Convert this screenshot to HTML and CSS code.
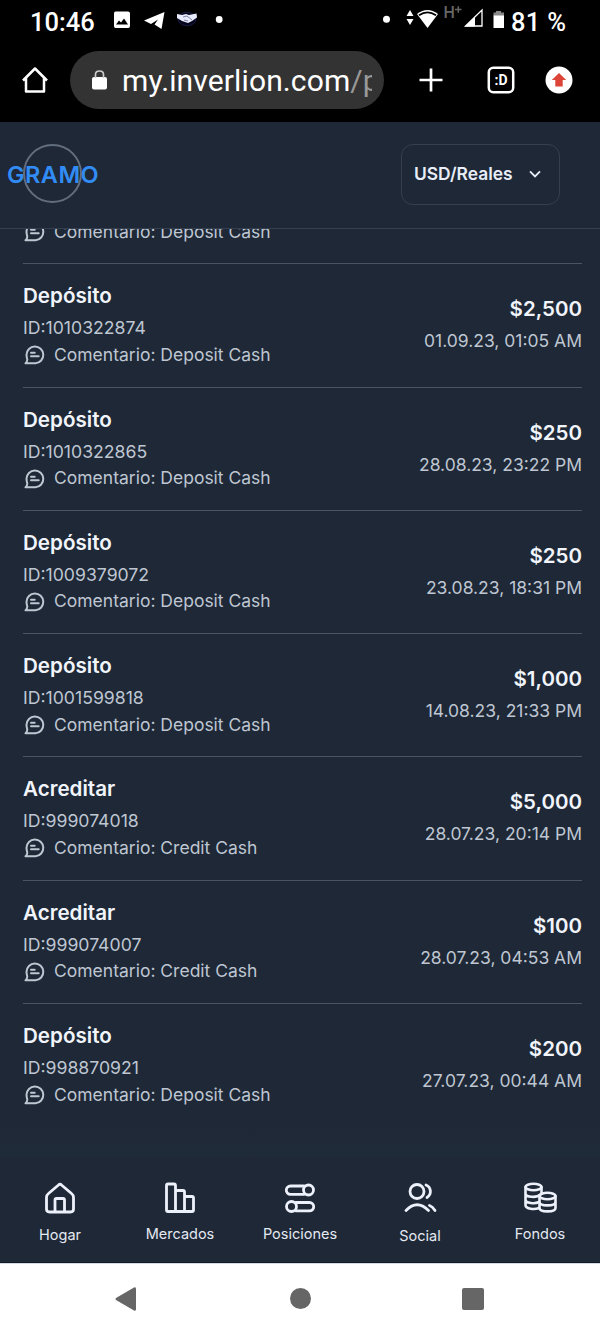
FILE: index.html
```
<!DOCTYPE html>
<html lang="es">
<head>
<meta charset="utf-8">
<title>Gramo</title>
<link rel="stylesheet" href="styles.css">
</head>
<body>
<svg class="defs" aria-hidden="true">
  <symbol id="chat" viewBox="0 0 22 20"><path d="M1.500 18.300H11.500A8.400 8.400 0 1 0 2.500 9.800C2.500 12 3 13.500 3.300 14.500C3.300 16.300 2.500 17.500 1.500 18.300ZM7 7.700H10.700M7 11.300H14.700" fill="none" stroke="currentColor" stroke-width="2" stroke-linecap="round" stroke-linejoin="round"/></symbol>
</svg>
<div class="phone">
  <div class="status">
    <span class="clock">10:46</span>
    <svg class="status-left" width="115" height="24" viewBox="0 0 115 24">
      <path fill="#fff" fill-rule="evenodd" d="M6.500 3.500H19Q21 3.500 21 5.500V18Q21 20 19 20H6.500Q5 20 5 18V5.500Q5 3.500 6.500 3.500ZM7 16.500H19L15 10.500L12 14.500L10 12.500Z"/>
      <path fill="#fff" d="M35 12.500L55.500 4L52.500 21L45.500 16.500L49 11.500L42 16Z"/>
      <ellipse cx="78" cy="11" rx="9" ry="6.800" fill="#05051c" stroke="#202052" stroke-width=".8"/>
      <path d="M68 6L73 7L77 6L80 7L87.500 5.500L88 9.500L83 13L79 15L73 13L68 10Z" fill="#e9ebff"/>
      <path d="M74 9L78 8L83 12M75 12L79 13" fill="none" stroke="#65678e" stroke-width=".8"/>
      <circle cx="110.200" cy="11.500" r="3.400" fill="#fff"/>
    </svg>
    <svg class="status-right" width="125" height="34" viewBox="0 0 125 34">
      <circle cx="5.500" cy="19.300" r="3.500" fill="#fff"/>
      <path fill="#fff" d="M25.500 16L29 10L32.500 16ZM25.500 19L29 25L32.500 19Z"/>
      <path fill="#fff" d="M36 14Q46.500 6 57 14L46.500 28Z"/><path d="M38 15.300Q46.500 9.300 55 15.300" stroke="#000" stroke-width="1.700" fill="none"/>
      <text class="network" x="62.500" y="17.500">H</text><path d="M74 9.500H80.500M77.300 6.300V12.700" stroke="#666" stroke-width="1.500"/>
      <path d="M84.500 26H101V10Z" fill="none" stroke="#fff" stroke-width="1.300"/><path fill="#fff" d="M84 26.500H94V16.500Z"/>
      <path fill="#888" d="M115 11H120V12.500H123V16H112.500V12.500H115Z"/><path fill="#fff" d="M112.500 15.500H123V28H112.500Z"/>
    </svg>
    <span class="battery">81 %</span>
  </div>
  <div class="browser">
    <svg class="home" width="28" height="28" viewBox="0 0 28 28"><path d="M2 14.500L14 2.500L26 14.500M5 12V25.500H23V12" fill="none" stroke="#fff" stroke-width="2.500" stroke-linejoin="round"/></svg>
    <div class="url">
      <svg width="16" height="20" viewBox="0 0 16 20"><rect y="7" width="15" height="12.500" rx="2" fill="#fff"/><path d="M3.500 8V4.500Q3.500 1 7.500 1Q11.500 1 11.500 4.500V8" fill="none" stroke="#ccc" stroke-width="1.700"/></svg>
      <span class="address">my.inverlion.com<span class="path">/p</span></span>
    </div>
    <svg class="plus" width="24" height="24" viewBox="0 0 24 24"><path d="M12 .5V23.500M.5 12H23.500" stroke="#fff" stroke-width="2.700"/></svg>
    <svg class="tabs" width="28" height="28" viewBox="0 0 28 28"><rect x="1.800" y="1.800" width="24.400" height="24.400" rx="4.500" fill="none" stroke="#fff" stroke-width="2.500"/><text x="7.500" y="18.500">:D</text></svg>
    <svg class="update" width="28" height="28" viewBox="0 0 28 28"><circle cx="14" cy="14" r="13.500" fill="#fff"/><path d="M14 7L21.200 14H17.700V20.500H10.300V14H6.800Z" fill="#db4437"/></svg>
  </div>
  <header class="header">
    <div class="brand"><span>GRAMO</span><i class="ring"></i></div>
    <button class="account"><span>USD/Reales</span><svg width="14" height="10" viewBox="0 0 14 10"><path d="M2 2.300L7 7.300L12 2.300" fill="none" stroke="currentColor" stroke-width="1.900"/></svg></button>
  </header>
  <main class="list">
    <section class="partial"><div class="note"><svg><use href="#chat"/></svg><span>Comentario: Deposit Cash</span></div></section>
    <section class="row"><div><h2>Depósito</h2><p class="id">ID:1010322874</p><div class="note"><svg><use href="#chat"/></svg><span>Comentario: Deposit Cash</span></div></div><div class="sum"><b>$2,500</b><p><span>01.09.23, 01:05 AM</span></p></div></section>
    <section class="row"><div><h2>Depósito</h2><p class="id">ID:1010322865</p><div class="note"><svg><use href="#chat"/></svg><span>Comentario: Deposit Cash</span></div></div><div class="sum"><b>$250</b><p><span>28.08.23, 23:22 PM</span></p></div></section>
    <section class="row"><div><h2>Depósito</h2><p class="id">ID:1009379072</p><div class="note"><svg><use href="#chat"/></svg><span>Comentario: Deposit Cash</span></div></div><div class="sum"><b>$250</b><p><span>23.08.23, 18:31 PM</span></p></div></section>
    <section class="row"><div><h2>Depósito</h2><p class="id">ID:1001599818</p><div class="note"><svg><use href="#chat"/></svg><span>Comentario: Deposit Cash</span></div></div><div class="sum"><b>$1,000</b><p><span>14.08.23, 21:33 PM</span></p></div></section>
    <section class="row"><div><h2>Acreditar</h2><p class="id">ID:999074018</p><div class="note"><svg><use href="#chat"/></svg><span>Comentario: Credit Cash</span></div></div><div class="sum"><b>$5,000</b><p><span>28.07.23, 20:14 PM</span></p></div></section>
    <section class="row"><div><h2>Acreditar</h2><p class="id">ID:999074007</p><div class="note"><svg><use href="#chat"/></svg><span>Comentario: Credit Cash</span></div></div><div class="sum"><b>$100</b><p><span>28.07.23, 04:53 AM</span></p></div></section>
    <section class="row"><div><h2>Depósito</h2><p class="id">ID:998870921</p><div class="note"><svg><use href="#chat"/></svg><span>Comentario: Deposit Cash</span></div></div><div class="sum"><b>$200</b><p><span>27.07.23, 00:44 AM</span></p></div></section>
  </main>
  <nav class="nav">
    <a class="low"><svg viewBox="0 0 34 34"><path d="M5.500 12.500Q3.500 14 3.500 16.500V28Q3.500 31 6.500 31H27.500Q30.500 31 30.500 28V16.500Q30.500 14 28.500 12.500L18.500 4Q17 2.500 15.500 4ZM12 31V19Q12 17.500 13.500 17.500H20Q21.500 17.500 21.500 19V31"/></svg><span>Hogar</span></a>
    <a><svg viewBox="0 0 34 34"><path d="M5 3H11Q12.500 3 12.500 4.500V30.500H5Q3.500 30.500 3.500 29V4.500Q3.500 3 5 3ZM12.500 9.500H20Q21.500 9.500 21.500 11V30.500H12.500M21.500 15.500H29Q30.500 15.500 30.500 17V29Q30.500 30.500 29 30.500H21.500"/></svg><span>Mercados</span></a>
    <a><svg viewBox="0 0 34 34"><path d="M21 5H7.500A4.200 4.200 0 0 0 7.500 13.400H21M13 21.500H26.500A4.200 4.200 0 0 1 26.500 29.900H13"/><circle cx="25.500" cy="9" r="5"/><circle cx="8.500" cy="25.500" r="5"/></svg><span>Posiciones</span></a>
    <a class="lower"><svg viewBox="0 0 34 34"><circle cx="14" cy="10.500" r="7"/><path d="M23 4A7 7 0 0 1 24 16.500M3 29.500Q14 18 25.500 29.500M26.500 24.500Q29.500 25.500 32 29.500"/></svg><span>Social</span></a>
    <a><svg class="coins" viewBox="0 0 34 34"><ellipse cx="10.500" cy="6" rx="8" ry="3.200"/><path d="M2.500 6V24C2.500 28.500 12 28.500 16 27M2.500 12.500C2.500 16.500 14 17 17.500 13.500M2.500 18.500C2.500 22.500 12 23 16 21M18.500 6V12"/><ellipse cx="24.500" cy="15" rx="8" ry="3.200"/><path d="M16.500 15V27C16.500 31.500 32.500 31.500 32.500 27V15M16.500 21C16.500 25.500 32.500 25.500 32.500 21"/></svg><span>Fondos</span></a>
  </nav>
  <footer class="system">
    <svg width="22" height="24" viewBox="0 0 22 24"><path d="M1 11Q0 12 1 13L19 23.500Q21 24.500 21 22V2Q21-.5 19 .5Z" fill="#666"/></svg>
    <i class="dot"></i><i class="square"></i>
  </footer>
</div>
</body>
</html>
```
FILE: styles.css
```
* { box-sizing: border-box; }
body { margin: 0; background: #1e2836; font-family: Inter, sans-serif; }
h2, p { margin: 0; }
.defs { display: none; }
.phone { width: 600px; height: 1333px; display: flex; flex-direction: column; overflow: hidden; }
.phone > * { flex-shrink: 0; }
.status { height: 40px; background: #000; color: #fff; display: flex; align-items: flex-start; padding: 9px 0 0 30px; font: 500 25.500px/26px Roboto, sans-serif; }
.clock { width: 79px; }
.status-left { margin-top: -1px; }
.status-right { margin: -9px 0 0 157px; }
.battery { margin-left: 5px; white-space: nowrap; letter-spacing: 0.3px; }
.network { font: 500 16px Roboto, sans-serif; fill: #666; }
.browser { height: 82px; background: #000; display: flex; padding: 11px 0 0 21px; }
.home { margin-top: 15px; }
.url { width: 314px; height: 58px; margin-left: 21px; border-radius: 29px; background: #333; color: #fff; display: flex; align-items: center; padding-left: 22px; }
.address { width: 250px; margin-left: 14px; overflow: hidden; white-space: nowrap; font: 400 30px/40px Roboto, sans-serif; padding-top: 2px; letter-spacing: 0.12px; }
.path { color: #999; }
.plus { margin: 17px 0 0 35px; }
.tabs { margin: 15px 0 0 44px; }
.tabs text { font: 700 14px Roboto, sans-serif; fill: #fff; }
.update { margin: 15px 0 0 30px; }
.header { height: 107px; border-bottom: 1px solid #344050; display: flex; justify-content: space-between; padding: 22px 40px 0 7px; }
.brand { position: relative; height: 60px; display: flex; align-items: center; color: #328cf5; font-size: 23.500px; font-weight: 600; letter-spacing: 0.45px; }
.ring { position: absolute; left: 16px; top: 0; width: 59px; height: 59px; border: 2px solid #626d7e; border-radius: 50%; }
.account { width: 159px; height: 61px; border: 1px solid #344050; border-radius: 12px; background: transparent; color: #e8edf8; display: flex; align-items: center; gap: 15px; padding: 0 0 2px 12px; font: 600 17.400px Inter, sans-serif; }
.list { height: 928px; overflow: hidden; padding: 0 18px 0 23px; background: linear-gradient(180deg, #1e2836 895px, #202b3a 928px); color: #bec6d2; }
.partial { height: 35.300px; border-bottom: 1px solid #4a5564; display: flex; }
.partial .note { margin-top: -11px; }
.row { height: 123.300px; border-bottom: 1px solid #4a5564; display: flex; justify-content: space-between; padding-top: 18px; }
.row:last-child { border-bottom: 0; }
.row h2 { font-size: 20.600px; line-height: 28px; font-weight: 600; color: #f1f5fb; }
.id { margin-top: 5px; font-size: 17.650px; line-height: 26px; }
.note { height: 26px; display: flex; align-items: center; font-size: 17.500px; white-space: nowrap; }
.note svg { width: 22px; height: 20px; margin: 2px 8px 0 1px; }
.sum { padding-top: 13px; text-align: right; }
.sum b { display: block; font-size: 20.500px; line-height: 28px; font-weight: 600; color: #f1f5fb; }
.sum p { margin-top: 5px; font-size: 17.500px; line-height: 26px; }
.nav { height: 106px; background: #1e2836; display: grid; grid-template-columns: repeat(5, 120px); padding-top: 24px; color: #e4e9f2; border-bottom: 1px solid #121c29; }
.nav a { display: flex; flex-direction: column; align-items: center; font-size: 14.500px; line-height: 20px; gap: 9px; }
.nav a svg { width: 34px; height: 34px; fill: none; stroke: #edf1fb; stroke-width: 2.800; stroke-linecap: round; stroke-linejoin: round; }
.nav a .coins { stroke-width: 2.600; }
.nav .low { gap: 10px; }
.nav .lower { gap: 11px; }
.system { height: 70px; border-top: 1px solid #d6d9e2; background: #fff; display: flex; align-items: center; padding-left: 115px; }
.dot { width: 21px; height: 21px; border-radius: 50%; background: #666; margin-left: 153px; }
.square { width: 22px; height: 22px; border-radius: 2px; background: #666; margin-left: 151px; }
```
